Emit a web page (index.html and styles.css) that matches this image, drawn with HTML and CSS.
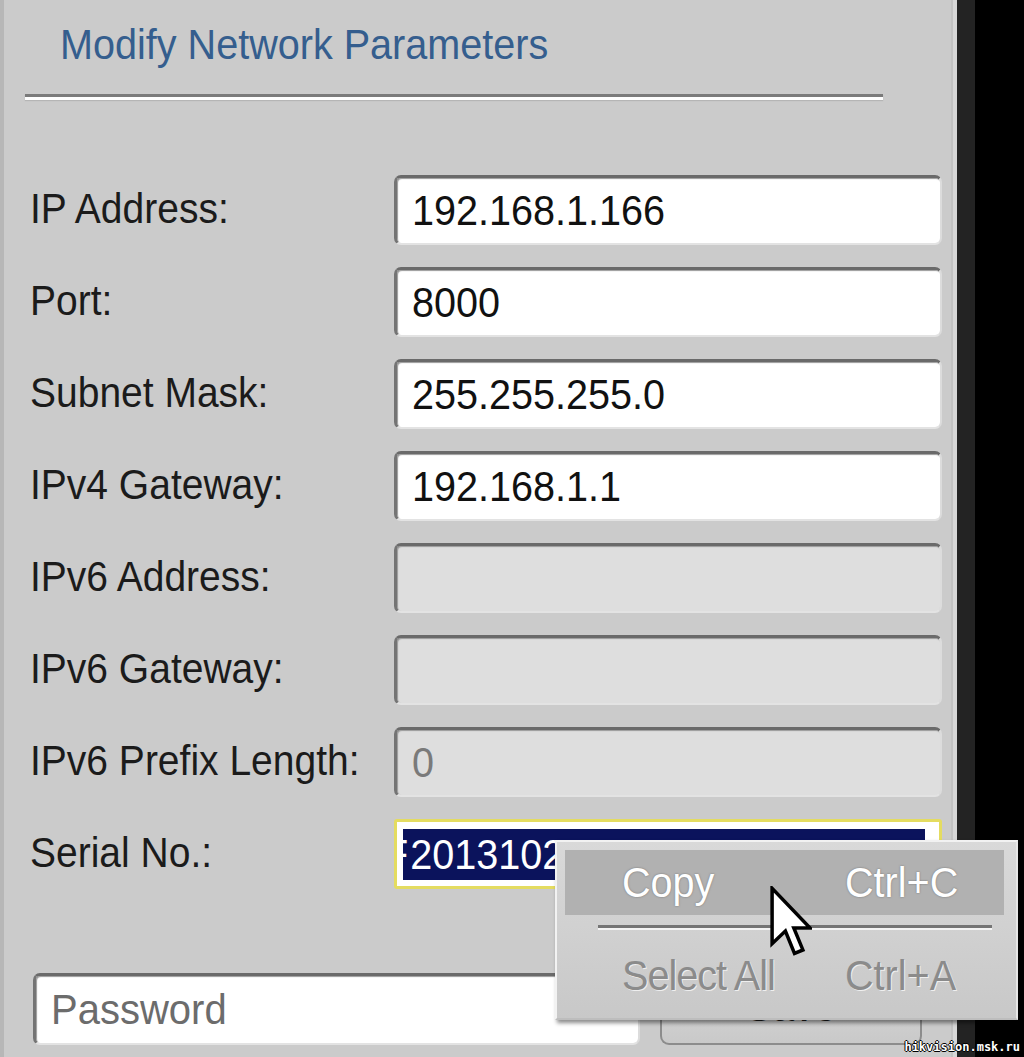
FILE: index.html
```html
<!DOCTYPE html>
<html>
<head>
<meta charset="utf-8">
<title>Modify Network Parameters</title>
<link rel="stylesheet" href="styles.css">
</head>
<body>
<div class="screen">
  <div class="panel">
    <h1 class="title"><span class="t">Modify Network Parameters</span></h1>
    <div class="sep"></div>
    <div class="form">
      <div class="lbl"><span class="t">IP Address:</span></div>
      <div class="field"><span class="t">192.168.1.166</span></div>
      <div class="lbl"><span class="t">Port:</span></div>
      <div class="field"><span class="t">8000</span></div>
      <div class="lbl"><span class="t">Subnet Mask:</span></div>
      <div class="field"><span class="t">255.255.255.0</span></div>
      <div class="lbl"><span class="t">IPv4 Gateway:</span></div>
      <div class="field"><span class="t">192.168.1.1</span></div>
      <div class="lbl"><span class="t">IPv6 Address:</span></div>
      <div class="field disabled"></div>
      <div class="lbl"><span class="t">IPv6 Gateway:</span></div>
      <div class="field disabled"></div>
      <div class="lbl"><span class="t">IPv6 Prefix Length:</span></div>
      <div class="field disabled"><span class="t">0</span></div>
      <div class="lbl"><span class="t">Serial No.:</span></div>
      <div class="field focused">
        <div class="selection"><span class="t clip">F</span><span class="t">2013102519CCWR</span></div>
      </div>
    </div>
    <div class="actions">
      <div class="field pwd"><span class="t">Password</span></div>
      <div class="btn"><span class="t">Save</span></div>
    </div>
  </div>
  <div class="edge"></div>
  <div class="void"></div>

  <div class="menu">
    <div class="item active"><span class="t">Copy</span><span class="t key">Ctrl+C</span></div>
    <div class="msep"></div>
    <div class="item disabled-item"><span class="t">Select All</span><span class="t key">Ctrl+A</span></div>
  </div>

  <svg class="cursor" viewBox="0 0 12 21" width="42" height="74">
    <path d="M0.6,0.6 L0.6,16.4 L4.4,12.8 L7,19.2 L9.4,18.2 L6.8,11.9 L11.4,11.9 Z" fill="#fff" stroke="#000" stroke-width="1" stroke-linejoin="miter"/>
  </svg>

  <div class="mark">hikvision.msk.ru</div>
</div>
</body>
</html>
```
FILE: styles.css
```css
* { box-sizing: border-box; }

html, body {
  margin: 0;
  padding: 0;
  background: #000;
}

.screen {
  position: relative;
  display: flex;
  width: 1024px;
  height: 1057px;
  overflow: hidden;
  font-family: "Liberation Sans", Arial, sans-serif;
  color: #1b1b1b;
}

.t {
  display: inline-block;
  transform: scaleY(1.08);
  white-space: pre;
}

.panel {
  width: 957px;
  height: 1057px;
  background: #cbcbcb;
  border-left: 4px solid #b7b7b7;
  border-right: 4px solid #d7d7d7;
  padding-top: 20px;
  box-shadow: inset -2px 0 0 #c2c2c2;
}

.edge {
  width: 18px;
  background: #232323;
}

.void {
  flex: 1;
  background: #000;
}

.title {
  margin: 0 0 0 56px;
  font-size: 39.6px;
  font-weight: normal;
  line-height: 48px;
  height: 48px;
  color: #355e8e;
}

.sep {
  margin: 26px 0 0 21px;
  width: 858px;
  height: 6px;
  border-top: 3px solid #7a7a7a;
  background: #fdfdfd;
  box-shadow: 0 1px 1px #b5b5b5;
}

.form {
  margin-top: 75px;
  padding-left: 26px;
  display: grid;
  grid-template-columns: 364px 548px;
  grid-auto-rows: 70px;
  row-gap: 22px;
}

.lbl {
  display: flex;
  align-items: center;
  font-size: 39px;
  color: #1b1b1b;
  padding-bottom: 2px;
}

.field {
  height: 70px;
  display: flex;
  align-items: center;
  background: #fff;
  border-top: 3px solid #6a6a6a;
  border-left: 3px solid #747474;
  border-right: 2px solid #dcdcdc;
  border-bottom: 2px solid #e3e3e3;
  border-radius: 7px;
  padding-left: 15px;
  font-size: 39.6px;
  color: #111;
  box-shadow: inset 1px 1px 1px #9a9a9a;
}

.field.disabled {
  background: #dedede;
  color: #7a7a7a;
}

.field.focused {
  border: 3px solid #e4dc60;
  border-radius: 3px;
  box-shadow: none;
  padding: 7px 14px 6px 6px;
  align-items: stretch;
}

.selection {
  flex: 1;
  background: #0b135c;
  color: #fff;
  display: flex;
  align-items: center;
  overflow: hidden;
  font-size: 39.6px;
}

.selection .clip {
  margin-left: -19px;
  margin-right: 2px;
}

.actions {
  display: flex;
  margin-top: 84px;
  padding-left: 29px;
}

.field.pwd {
  width: 607px;
  height: 72px;
  color: #6c6c6c;
  font-size: 40px;
}

.btn {
  margin-left: 20px;
  width: 262px;
  height: 68px;
  margin-top: 4px;
  display: flex;
  align-items: center;
  justify-content: center;
  padding-bottom: 9px;
  font-size: 40px;
  color: #1a1a1a;
  background: linear-gradient(#d9d9d9, #c9c9c9);
  border: 2px solid #8c8c8c;
  border-top-color: #d0d0d0;
  border-radius: 9px;
}

.menu {
  position: absolute;
  left: 555px;
  top: 840px;
  width: 463px;
  height: 180px;
  padding: 8px 12px 0 8px;
  background: linear-gradient(#d9d9d9, #c8c8c8);
  border: 2px solid #f2f2f2;
  border-right-color: #e6e6e6;
  border-bottom-color: #bdbdbd;
  box-shadow: 2px 3px 4px rgba(0, 0, 0, 0.45);
  font-size: 39.6px;
}

.item {
  height: 65px;
  display: flex;
  align-items: center;
  padding-left: 57px;
}

.item .key {
  margin-left: auto;
  width: 159px;
}

.item.active {
  background: #b1b1b1;
  color: #fff;
  text-shadow: 0 0 2px #6f6f6f;
}

.msep {
  margin: 10px 12px 0 33px;
  height: 5px;
  border-top: 3px solid #757575;
  background: #f4f4f4;
}

.disabled-item {
  height: 84px;
  padding-top: 6px;
  color: #8b8b8b;
  text-shadow: 1px 1px 0 #efefef;
}

.disabled-item .t:first-child {
  letter-spacing: -1px;
}

.cursor {
  position: absolute;
  left: 770px;
  top: 886px;
}

.mark {
  position: absolute;
  right: 4px;
  bottom: 3px;
  font-family: "DejaVu Sans Mono", monospace;
  font-weight: bold;
  font-size: 12px;
  line-height: 14px;
  color: #fff;
  text-shadow: 1px 0 0 #000, -1px 0 0 #000, 0 1px 0 #000, 0 -1px 0 #000;
}
```
